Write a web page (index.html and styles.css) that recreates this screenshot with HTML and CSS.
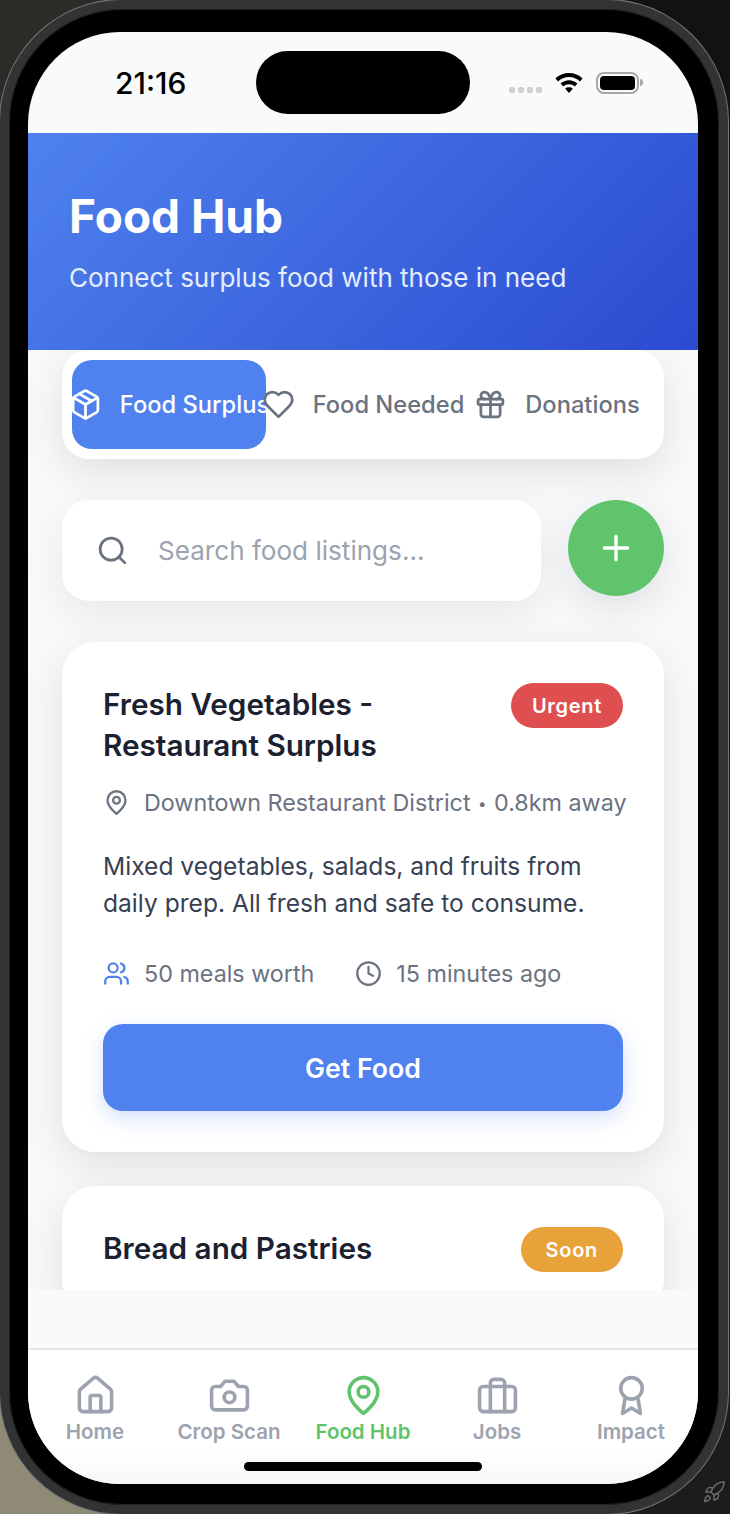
FILE: index.html
```html
<!DOCTYPE html>
<html lang="en">
<head>
    <meta charset="UTF-8">
    <meta name="viewport" content="width=device-width, initial-scale=1.0">
    <title>Food Hub</title>
    <link rel="stylesheet" href="styles.css">
</head>
<body>
    <div class="phone">
        <div class="screen">
            <div class="status-bar">
                <span class="status-time">21:16</span>
                <div class="island"></div>
                <div class="status-icons">
                    <div class="signal"><i></i><i></i><i></i><i></i></div>
                    <svg class="wifi" viewBox="0 0 28 20"><path d="M14 0C8.800 0 4 2 .4 5.400l2.700 3C6 5.700 9.800 4.100 14 4.100s8 1.600 10.900 4.300l2.700-3C24 2 19.200 0 14 0z"/><path d="M14 7.200c-3.300 0-6.300 1.300-8.500 3.300l2.800 3c1.500-1.300 3.500-2.200 5.700-2.200s4.200.9 5.700 2.200l2.800-3c-2.200-2-5.200-3.300-8.500-3.300z"/><path d="M14 14.300c-1.500 0-2.800.5-3.800 1.400L14 20l3.800-4.300c-1-.9-2.300-1.400-3.800-1.400z"/></svg>
                    <div class="battery"><div class="battery-fill"></div></div>
                    <div class="battery-cap"></div>
                </div>
            </div>

            <header class="hub-header">
                <h1>Food Hub</h1>
                <p>Connect surplus food with those in need</p>
            </header>

            <main class="content">
                <div class="tabs">
                    <div class="tab tab-active">
                        <svg class="icon" viewBox="0 0 24 24"><path d="m7.500 4.270 9 5.150"/><path d="M21 8a2 2 0 0 0-1-1.730l-7-4a2 2 0 0 0-2 0l-7 4A2 2 0 0 0 3 8v8a2 2 0 0 0 1 1.730l7 4a2 2 0 0 0 2 0l7-4A2 2 0 0 0 21 16Z"/><path d="m3.300 7 8.700 5 8.700-5"/><path d="M12 22V12"/></svg>
                        <span>Food Surplus</span>
                    </div>
                    <div class="tab">
                        <svg class="icon" viewBox="0 0 24 24"><path d="M19 14c1.490-1.460 3-3.210 3-5.500A5.500 5.500 0 0 0 16.500 3c-1.760 0-3 .5-4.500 2-1.500-1.500-2.740-2-4.500-2A5.500 5.500 0 0 0 2 8.500c0 2.300 1.500 4.050 3 5.500l7 7Z"/></svg>
                        <span>Food Needed</span>
                    </div>
                    <div class="tab">
                        <svg class="icon" viewBox="0 0 24 24"><rect x="3" y="8" width="18" height="4" rx="1"/><path d="M12 8v13"/><path d="M19 12v7a2 2 0 0 1-2 2H7a2 2 0 0 1-2-2v-7"/><path d="M7.500 8a2.500 2.500 0 0 1 0-5A4.800 8 0 0 1 12 8a4.800 8 0 0 1 4.500-5 2.500 2.500 0 0 1 0 5"/></svg>
                        <span>Donations</span>
                    </div>
                </div>

                <div class="search-row">
                    <div class="search-box">
                        <svg class="icon" viewBox="0 0 24 24"><circle cx="11" cy="11" r="8"/><path d="m21 21-4.300-4.300"/></svg>
                        <span>Search food listings...</span>
                    </div>
                    <div class="add-button">
                        <svg class="icon" viewBox="0 0 24 24"><path d="M5 12h14"/><path d="M12 5v14"/></svg>
                    </div>
                </div>

                <section class="card">
                    <div class="card-top">
                        <h3>Fresh Vegetables - Restaurant Surplus</h3>
                        <span class="badge badge-urgent">Urgent</span>
                    </div>
                    <div class="card-location">
                        <svg class="icon" viewBox="0 0 24 24"><path d="M20 10c0 6-8 12-8 12s-8-6-8-12a8 8 0 0 1 16 0Z"/><circle cx="12" cy="10" r="3"/></svg>
                        <span>Downtown Restaurant District <span class="dot">•</span> 0.8km away</span>
                    </div>
                    <p class="card-text">Mixed vegetables, salads, and fruits from daily prep. All fresh and safe to consume.</p>
                    <div class="card-meta">
                        <div class="meta-item">
                            <svg class="icon icon-blue" viewBox="0 0 24 24"><path d="M16 21v-2a4 4 0 0 0-4-4H6a4 4 0 0 0-4 4v2"/><circle cx="9" cy="7" r="4"/><path d="M22 21v-2a4 4 0 0 0-3-3.870"/><path d="M16 3.130a4 4 0 0 1 0 7.750"/></svg>
                            <span>50 meals worth</span>
                        </div>
                        <div class="meta-item">
                            <svg class="icon" viewBox="0 0 24 24"><circle cx="12" cy="12" r="10"/><polyline points="12 6 12 12 16 14"/></svg>
                            <span>15 minutes ago</span>
                        </div>
                    </div>
                    <button class="get-button">Get Food</button>
                </section>

                <section class="card">
                    <div class="card-top">
                        <h3>Bread and Pastries</h3>
                        <span class="badge badge-soon">Soon</span>
                    </div>
                </section>
            </main>

            <div class="content-end"></div>

            <nav class="bottom-nav">
                <div class="nav-item">
                    <svg class="icon" viewBox="0 0 24 24"><path d="M15 21v-8a1 1 0 0 0-1-1h-4a1 1 0 0 0-1 1v8"/><path d="M3 10a2 2 0 0 1 .709-1.528l7-5.999a2 2 0 0 1 2.582 0l7 5.999A2 2 0 0 1 21 10v9a2 2 0 0 1-2 2H5a2 2 0 0 1-2-2z"/></svg>
                    <span>Home</span>
                </div>
                <div class="nav-item">
                    <svg class="icon" viewBox="0 0 24 24"><path d="M14.500 4h-5L7 7H4a2 2 0 0 0-2 2v9a2 2 0 0 0 2 2h16a2 2 0 0 0 2-2V9a2 2 0 0 0-2-2h-3l-2.500-3z"/><circle cx="12" cy="13" r="3"/></svg>
                    <span>Crop Scan</span>
                </div>
                <div class="nav-item nav-active">
                    <svg class="icon" viewBox="0 0 24 24"><path d="M20 10c0 6-8 12-8 12s-8-6-8-12a8 8 0 0 1 16 0Z"/><circle cx="12" cy="10" r="3"/></svg>
                    <span>Food Hub</span>
                </div>
                <div class="nav-item">
                    <svg class="icon" viewBox="0 0 24 24"><rect x="2" y="7" width="20" height="14" rx="2"/><path d="M16 21V5a2 2 0 0 0-2-2h-4a2 2 0 0 0-2 2v16"/></svg>
                    <span>Jobs</span>
                </div>
                <div class="nav-item">
                    <svg class="icon" viewBox="0 0 24 24"><circle cx="12" cy="8" r="6"/><path d="M15.477 12.890 17 22l-5-3-5 3 1.523-9.110"/></svg>
                    <span>Impact</span>
                </div>
                <div class="home-indicator"></div>
            </nav>
        </div>
    </div>
    <svg class="corner-rocket" viewBox="0 0 24 24"><path d="M4.500 16.500c-1.500 1.260-2 5-2 5s3.740-.5 5-2c.71-.84.700-2.130-.09-2.910a2.180 2.180 0 0 0-2.910-.09z"/><path d="m12 15-3-3a22 22 0 0 1 2-3.950A12.880 12.880 0 0 1 22 2c0 2.720-.78 7.500-6 11a22.350 22.350 0 0 1-4 2z"/><path d="M9 12H4s.55-3.030 2-4c1.620-1.080 5 0 5 0"/><path d="M12 15v5s3.030-.55 4-2c1.080-1.620 0-5 0-5"/></svg>
</body>
</html>
```

FILE: styles.css
```css
/* General Styling */
* {
    box-sizing: border-box;
}

body {
    margin: 0;
    width: 730px;
    height: 1514px;
    overflow: hidden;
    position: relative;
    font-family: Inter, "Noto Sans", sans-serif;
    color: #1f2937;
    background:
        linear-gradient(90deg, #2b2b27 50%, #121212 50%) top / 100% 50% no-repeat,
        linear-gradient(90deg, #8f8a76 50%, #1c1c1c 50%) bottom / 100% 50% no-repeat;
}

.icon {
    width: 33px;
    height: 33px;
    flex-shrink: 0;
    fill: none;
    stroke: currentColor;
    stroke-width: 2;
    stroke-linecap: round;
    stroke-linejoin: round;
}

/* Phone Frame */
.phone {
    width: 728px;
    height: 1514px;
    padding: 23px 21px 21px 19px;
    background-color: #000;
    border: 9px solid #333;
    border-radius: 122px;
    box-shadow: inset 0 0 0 1px #222, 0 0 0 1px #777;
}

.screen {
    width: 670px;
    height: 1452px;
    border-radius: 92px;
    overflow: hidden;
    display: flex;
    flex-direction: column;
    background-color: #f9fafb;
}

/* Status Bar */
.status-bar {
    height: 101px;
    flex-shrink: 0;
    position: relative;
    display: flex;
    justify-content: space-between;
    align-items: center;
    padding: 0 55px 0 87px;
}

.status-time {
    font-size: 30px;
    font-weight: 500;
    color: #000;
}

.island {
    position: absolute;
    left: 228px;
    top: 19px;
    width: 214px;
    height: 63px;
    border-radius: 32px;
    background-color: #000;
}

.status-icons {
    display: flex;
    align-items: center;
}

.signal {
    display: flex;
    gap: 3px;
    margin-top: 14px;
    margin-right: 13px;
}

.signal i {
    width: 6px;
    height: 6px;
    border-radius: 2px;
    background-color: #cfcfd1;
}

.wifi {
    width: 28px;
    height: 20px;
    fill: #000;
    margin-right: 13px;
}

.battery {
    width: 43px;
    height: 22px;
    padding: 2px;
    border: 2px solid #a8a8a8;
    border-radius: 8px;
}

.battery-fill {
    width: 100%;
    height: 100%;
    border-radius: 4px;
    background-color: #000;
}

.battery-cap {
    width: 3px;
    height: 7px;
    margin-left: 1px;
    border-radius: 0 3px 3px 0;
    background-color: #a8a8a8;
}

/* Header */
.hub-header {
    height: 217px;
    flex-shrink: 0;
    padding: 52px 41px 0;
    color: #fff;
    background: linear-gradient(135deg, #4f82ee 0%, #2a4bd0 100%);
}

.hub-header h1 {
    margin: 0;
    font-size: 46px;
    line-height: 62px;
    font-weight: 700;
}

.hub-header p {
    margin: 15px 0 0;
    font-size: 26px;
    line-height: 32px;
    color: #e6ecfb;
}

/* Main Content */
.content {
    height: 940px;
    flex-shrink: 0;
    overflow: hidden;
    padding: 0 34px;
    background-color: #f8f9fb;
}

.content-end {
    height: 58px;
    flex-shrink: 0;
}

/* Tabs */
.tabs {
    display: flex;
    padding: 10px;
    height: 109px;
    border-radius: 27px;
    background-color: #fff;
    box-shadow: 0 13px 40px rgba(0, 0, 0, 0.1);
}

.tab {
    flex: 1 1 0;
    min-width: 0;
    display: flex;
    align-items: center;
    justify-content: center;
    gap: 18px;
    white-space: nowrap;
    border-radius: 20px;
    font-size: 23.700px;
    font-weight: 500;
    color: #6b7280;
}

.tab-active {
    color: #fff;
    background-color: #4f82ee;
}

/* Search */
.search-row {
    display: flex;
    align-items: flex-start;
    gap: 27px;
    margin-top: 41px;
}

.search-box {
    flex: 1;
    height: 101px;
    display: flex;
    align-items: center;
    gap: 29px;
    padding-left: 34px;
    border-radius: 27px;
    font-size: 26.100px;
    color: #9ca3af;
    background-color: #fff;
    box-shadow: 0 13px 40px rgba(0, 0, 0, 0.07);
}

.search-box .icon {
    color: #6b7280;
}

.add-button {
    width: 96px;
    height: 96px;
    flex-shrink: 0;
    display: flex;
    align-items: center;
    justify-content: center;
    border-radius: 50%;
    color: #fff;
    background-color: #5fc46b;
    box-shadow: 0 13px 40px rgba(0, 0, 0, 0.1);
}

.add-button .icon {
    width: 40px;
    height: 40px;
}

/* Listing Cards */
.card {
    margin-top: 41px;
    padding: 41px;
    border-radius: 33px;
    background-color: #fff;
    box-shadow: 0 13px 40px rgba(0, 0, 0, 0.1);
}

.card + .card {
    margin-top: 34px;
}

.card-top {
    display: flex;
    justify-content: space-between;
    align-items: flex-start;
    gap: 27px;
}

.card-top h3 {
    margin: 1px 0 0;
    font-size: 29.700px;
    line-height: 41px;
    font-weight: 600;
    color: #1a2130;
}

.badge {
    flex-shrink: 0;
    height: 45px;
    padding: 0 21px;
    display: flex;
    align-items: center;
    border-radius: 23px;
    font-size: 20px;
    font-weight: 600;
    letter-spacing: 0.7px;
    color: #fff;
}

.badge-urgent {
    background-color: #e04f4f;
}

.badge-soon {
    padding: 0 25px;
    background-color: #e8a23a;
}

.card-location,
.meta-item {
    display: flex;
    align-items: center;
    gap: 14px;
    font-size: 23.300px;
    color: #6b7280;
    white-space: nowrap;
}

.card-location {
    margin-top: 22px;
}

.card-location .icon,
.meta-item .icon {
    width: 27px;
    height: 27px;
}

.dot {
    margin: 0 1px;
    font-size: 15px;
    vertical-align: 2px;
}

.icon-blue {
    color: #4f82ee;
}

.card-text {
    margin: 31px 0 0;
    font-size: 24.600px;
    line-height: 37px;
    color: #374151;
}

.card-meta {
    display: flex;
    gap: 41px;
    margin-top: 37px;
}

.get-button {
    display: block;
    width: 100%;
    height: 87px;
    margin-top: 36px;
    border: none;
    border-radius: 20px;
    font-family: inherit;
    font-size: 26.700px;
    font-weight: 600;
    color: #fff;
    background-color: #4f82ee;
    box-shadow: 0 7px 20px rgba(79, 130, 238, 0.25);
}

/* Bottom Navigation */
.bottom-nav {
    flex: 1;
    position: relative;
    display: flex;
    padding-top: 24px;
    border-top: 2px solid #e5e7eb;
    background: linear-gradient(#fff 75%, #f6f6f7);
}

.nav-item {
    flex: 1 1 0;
    display: flex;
    flex-direction: column;
    align-items: center;
    gap: 2px;
    font-size: 20.500px;
    font-weight: 600;
    color: #9ca3af;
}

.nav-item .icon {
    width: 43px;
    height: 43px;
}

.nav-active {
    color: #5fc46b;
}

.home-indicator {
    position: absolute;
    left: 216px;
    bottom: 13px;
    width: 238px;
    height: 9px;
    border-radius: 5px;
    background-color: #000;
}

.corner-rocket {
    position: absolute;
    right: 4px;
    bottom: 10px;
    width: 24px;
    height: 24px;
    fill: none;
    stroke: #6b6b6b;
    stroke-width: 1.500;
}
```
